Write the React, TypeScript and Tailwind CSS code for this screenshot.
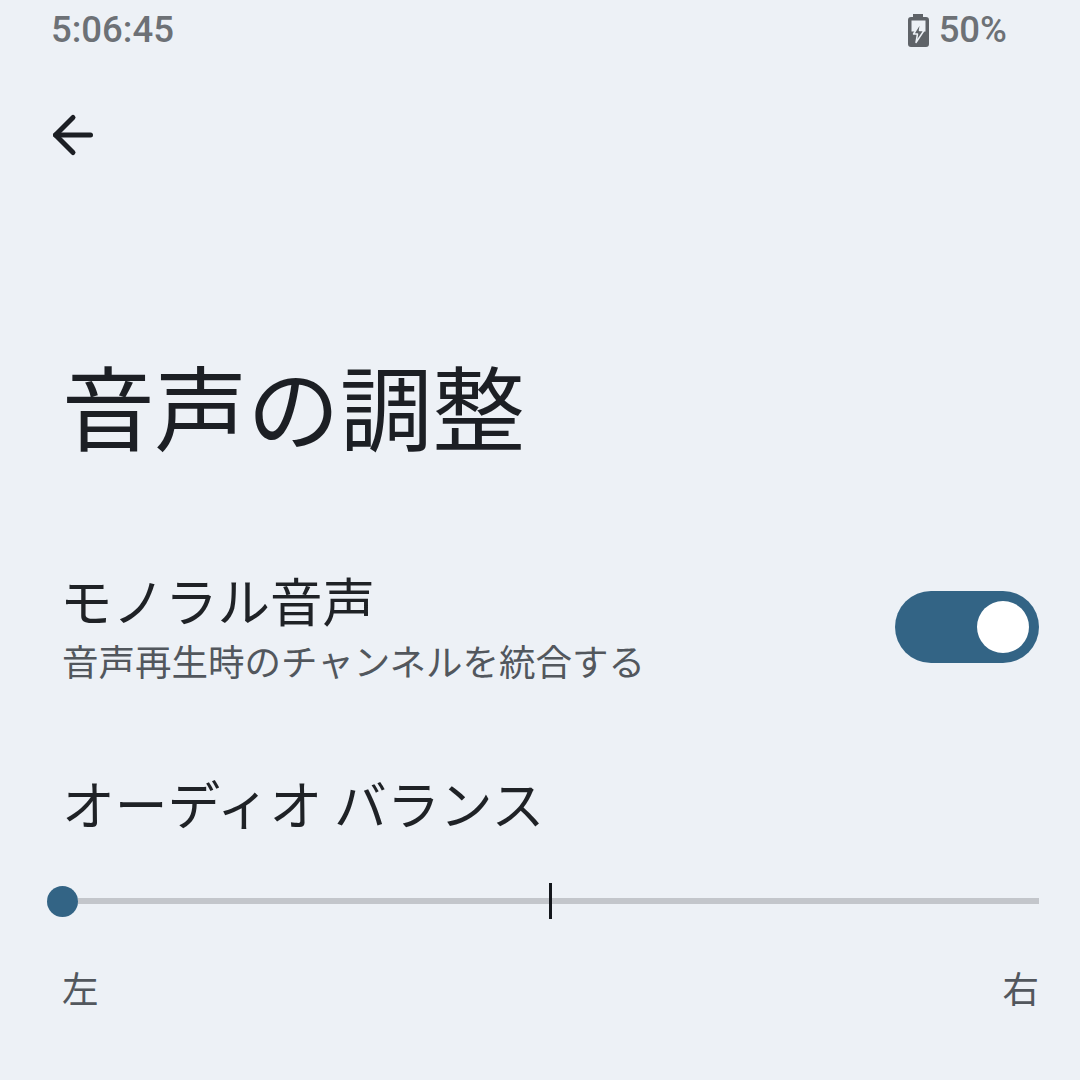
import { ArrowLeft } from "lucide-react";

const cjk = "font-['Noto_Sans_CJK_JP','Noto_Sans',sans-serif]";

function StatusBar() {
    return (
        <div className="flex h-[60px] items-center justify-between pl-[51px] pr-[74px] pt-[1px] font-['Roboto',sans-serif] text-[36.5px] font-medium text-[#6d7176]">
            <span>5:06:45</span>
            <div className="flex items-center gap-[10px]">
                <svg width="21" height="33" viewBox="0 0 21 33">
                    <path
                        fillRule="evenodd"
                        fill="#5f6368"
                        d="M5 0h10v3h3a3 3 0 0 1 3 3v24a3 3 0 0 1-3 3H3a3 3 0 0 1-3-3V6a3 3 0 0 1 3-3h2zM3.5 6.5v11h14v-11z"
                    />
                    <path d="M13 8L5.5 20h4L8 28.5 16 16.5h-4.5z" fill="#5f6368" stroke="#edf1f6" strokeWidth="1.5" strokeLinejoin="round" />
                </svg>
                <span className="-mr-[1px]">50%</span>
            </div>
        </div>
    );
}

export default function App() {
    return (
        <div className={`flex h-[1080px] w-[1080px] flex-col overflow-hidden bg-[#edf1f6] ${cjk}`}>
            <StatusBar />
            <div className="flex h-[150px] items-start pl-[43px] pt-[45px]">
                <ArrowLeft size={60} strokeWidth={2} className="text-[#1c1f24]" />
            </div>
            <h1 className="h-[330px] pl-[62px] pt-[126px] text-[92.6px] leading-[136px] font-normal text-[#1c1f24]">音声の調整</h1>
            <div className="flex items-start justify-between pl-[62px] pr-[41px] pt-[30px]">
                <div className="flex flex-col">
                    <span className="-ml-[2px] text-[52.5px] leading-[59px] text-[#1f2226]">モノラル音声</span>
                    <span className="mt-[5px] text-[36.5px] leading-[53px] text-[#52575d]">音声再生時のチャンネルを統合する</span>
                </div>
                <div className="mt-[21px] flex h-[72px] w-[144px] items-center justify-end rounded-full bg-[#336485] pr-[10px]">
                    <div className="h-[52px] w-[52px] rounded-full bg-white" />
                </div>
            </div>
            <div className="pl-[62px] pt-[80px] text-[52.8px] leading-[70px] text-[#1f2226]">オーディオ バランス</div>
            <div className="relative ml-[47px] mr-[41px] mt-[46px] flex h-[36px] items-center">
                <div className="h-[31px] w-[31px] shrink-0 rounded-full bg-[#336485]" />
                <div className="h-[6px] flex-1 bg-[#c3c6cb]" />
                <div className="absolute left-[502px] top-0 h-[36px] w-[3px] bg-[#14171c]" />
            </div>
            <div className="flex justify-between pl-[62px] pr-[41px] pt-[44px] text-[36.5px] leading-[50px] text-[#52575d]">
                <span>左</span>
                <span>右</span>
            </div>
        </div>
    );
}
